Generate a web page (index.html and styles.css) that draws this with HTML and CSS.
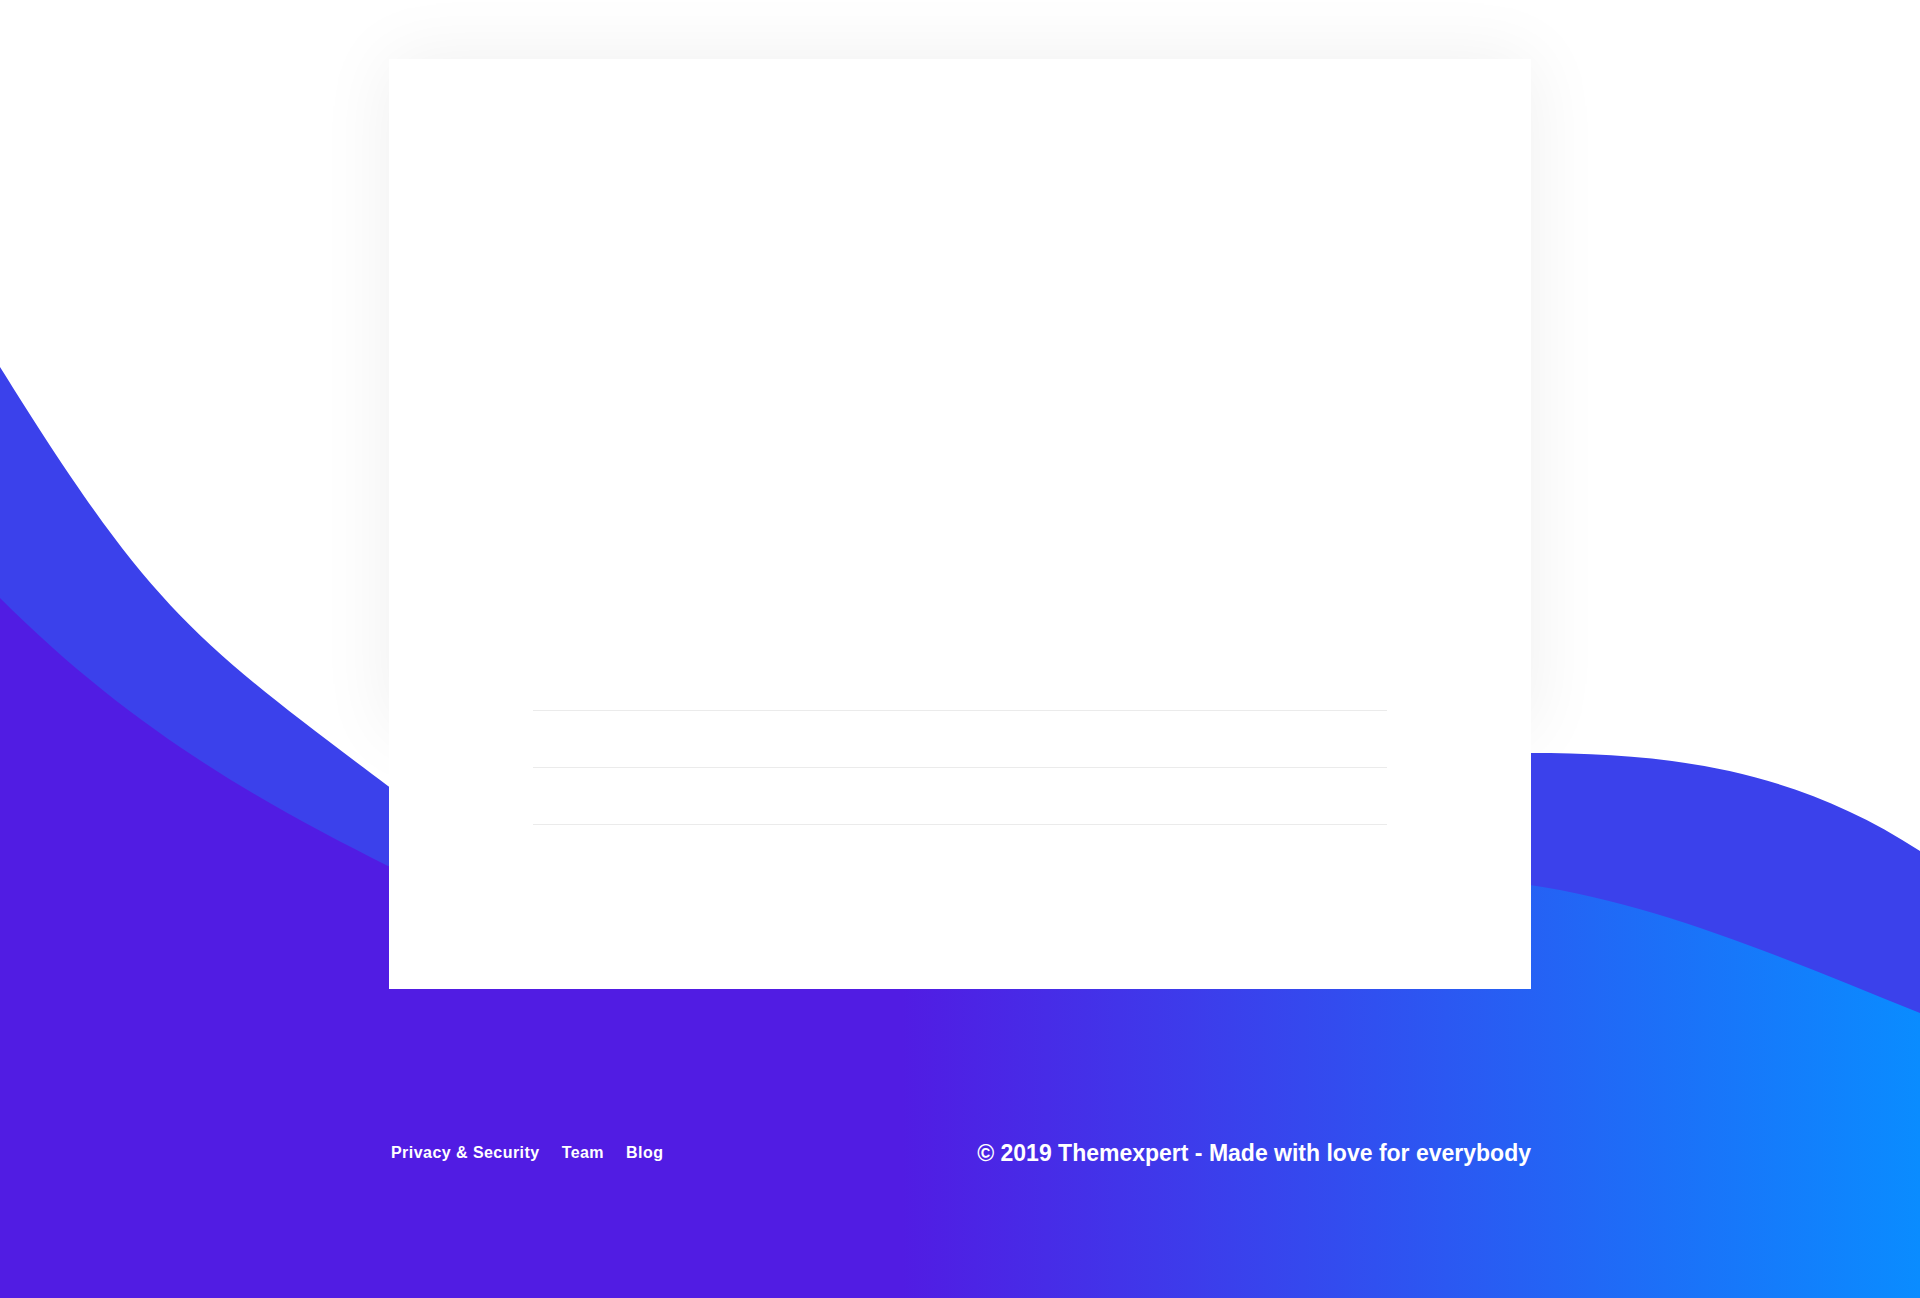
FILE: index.html
```html
<!DOCTYPE html>
<html lang="en">
<head>
    <meta charset="UTF-8">
    <meta name="viewport" content="width=device-width, initial-scale=1.0">
    <title>Themexpert</title>
    <link rel="stylesheet" href="styles.css">
</head>
<body>
    <div class="page">
        <!-- background waves -->
        <svg class="waves" viewBox="0 0 1920 1298" preserveAspectRatio="none" aria-hidden="true">
            <defs>
                <linearGradient id="footerGradient" gradientUnits="userSpaceOnUse" x1="0" y1="0" x2="1920" y2="0">
                    <stop offset="0" stop-color="#511ce3"/>
                    <stop offset="0.47" stop-color="#511ce3"/>
                    <stop offset="1" stop-color="#0a8cff"/>
                </linearGradient>
            </defs>
            <path class="wave-back" d="M0,367 C150,607 188,636 388,786 C600,945 1250,745 1530,753 C1660,753 1790,766 1920,851 L1920,1298 L0,1298 Z"/>
            <path d="M0,598 C130,728 258,801 388,866 C700,900 1300,880 1530,885 C1660,904 1790,961 1920,1013 L1920,1298 L0,1298 Z" fill="url(#footerGradient)"/>
        </svg>

        <main class="card">
            <ul class="card-list">
                <li></li>
                <li></li>
            </ul>
        </main>

        <footer class="footer">
            <nav class="footer-links">
                <a href="#">Privacy &amp; Security</a>
                <a href="#">Team</a>
                <a href="#">Blog</a>
            </nav>
            <p class="copyright">© 2019 Themexpert - Made with love for everybody</p>
        </footer>
    </div>
</body>
</html>
```

FILE: styles.css
```css
body {
    margin: 0;
    font-family: "Liberation Sans", Arial, sans-serif;
    background: #fff;
}

.page {
    position: relative;
    z-index: 0;
    height: 1298px;
    overflow: hidden;
    padding-top: 59px;
    box-sizing: border-box;
}

.waves {
    position: absolute;
    top: 0;
    left: 0;
    width: 100%;
    height: 100%;
}

.wave-back {
    fill: #3b41eb;
}

.card {
    position: relative;
    width: 1142px;
    height: 930px;
    margin: 0 auto;
    padding-top: 651px;
    box-sizing: border-box;
    background: #fff;
}

/* soft glow that sits under the waves */
.card::before {
    content: "";
    position: absolute;
    top: 0;
    left: 0;
    right: 0;
    height: 672px;
    z-index: -1;
    box-shadow: 0 0 70px rgba(0,0,0,0.065);
}

.card-list {
    list-style: none;
    width: 854px;
    margin: 0 auto;
    padding: 0;
    border-top: 1px solid #ebebeb;
}

.card-list li {
    height: 56px;
    border-bottom: 1px solid #ebebeb;
}

.footer {
    position: relative;
    width: 1142px;
    margin: 150px auto 0;
    display: flex;
    justify-content: space-between;
    align-items: center;
    height: 28px;
    color: #fff;
    font-weight: bold;
}

.footer-links {
    display: flex;
    gap: 22px;
    padding-left: 2px;
}

.footer-links a {
    color: #fff;
    text-decoration: none;
    font-size: 16px;
    letter-spacing: 0.45px;
}

.copyright {
    margin: 0;
    font-size: 23px;
}
```
